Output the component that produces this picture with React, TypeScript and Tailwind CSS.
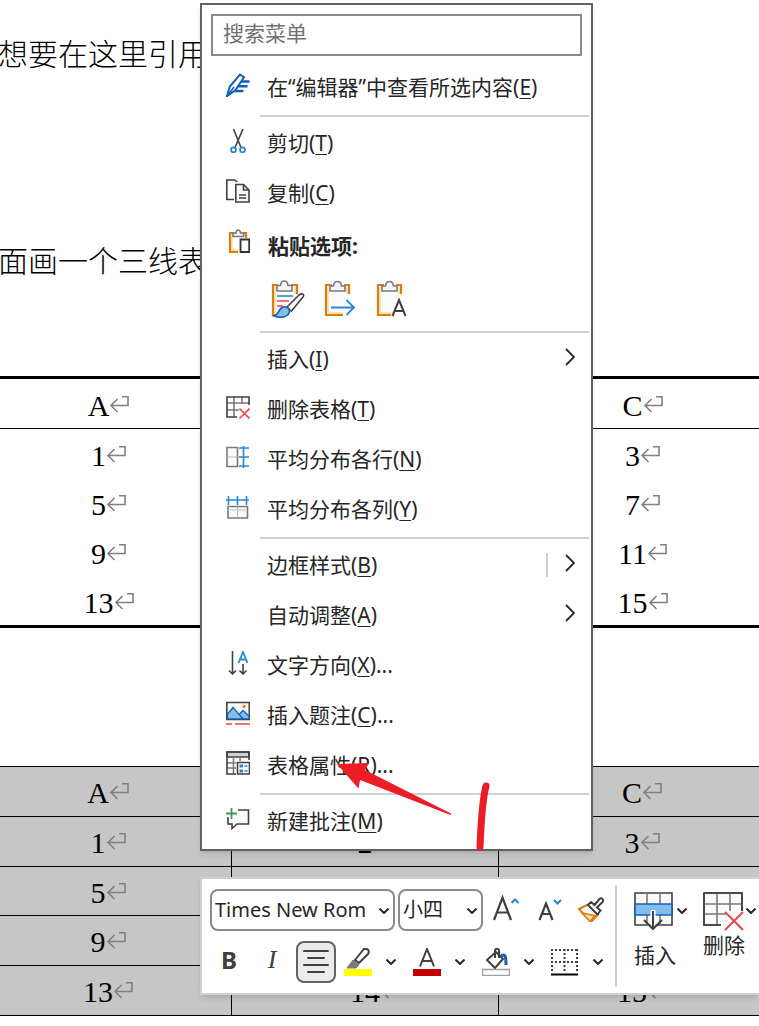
import React from 'react';

const rows = [
  ['1', '2', '3'],
  ['5', '6', '7'],
  ['9', '10', '11'],
  ['13', '14', '15'],
];

function ReturnMark() {
  return (
    <span className="inline-block w-0">
      <svg className="h-[21px] w-5" viewBox="0 0 20 21" fill="none" stroke="#808080" strokeWidth="1.600">
        <path d="M13 1.800h6v8.700H2M8.500 4 2 10.500 8.500 17" />
      </svg>
    </span>
  );
}

function ThreeLineTable() {
  return (
    <table className="w-full table-fixed border-separate border-spacing-0 text-center">
      <thead>
        <tr>
          {['A', 'B', 'C'].map((h) => (
            <th key={h} className="h-[53px] border-t-[3px] border-b border-black p-0 pt-1 font-normal">
              {h}
              <ReturnMark />
            </th>
          ))}
        </tr>
      </thead>
      <tbody className="[&>tr:last-child>td]:h-[52px] [&>tr:last-child>td]:border-b-[3px]">
        {rows.map((row) => (
          <tr key={row[0]}>
            {row.map((cell) => (
              <td key={cell} className="h-[49px] border-black p-0 pt-[3px]">
                {cell}
                <ReturnMark />
              </td>
            ))}
          </tr>
        ))}
      </tbody>
    </table>
  );
}

function GridTable() {
  return (
    <table className="w-full table-fixed border-separate border-spacing-0 border-b border-black bg-[#c6c6c6] text-center">
      <thead>
        <tr>
          {['A', 'B', 'C'].map((h) => (
            <th key={h} className="h-[50px] border-t border-r border-black p-0 pt-0.5 font-normal">
              {h}
              <ReturnMark />
            </th>
          ))}
        </tr>
      </thead>
      <tbody className="[&>tr:nth-child(2)>td]:h-[49px]">
        {rows.map((row) => (
          <tr key={row[0]}>
            {row.map((cell) => (
              <td key={cell} className="h-[50px] border-t border-r border-black p-0 pt-0.5">
                {cell}
                <ReturnMark />
              </td>
            ))}
          </tr>
        ))}
      </tbody>
    </table>
  );
}

interface IconProps {
  children: React.ReactNode;
  className?: string;
}

function Icon({ children, className = '' }: IconProps) {
  return (
    <svg className={`h-6 w-6 shrink-0 ${className}`} viewBox="0 0 24 24" fill="none" stroke="#404040" strokeWidth="1.600">
      {children}
    </svg>
  );
}

const icons = {
  editor: (
    <Icon>
      <path d="M14 8.500h9.500M11 13.300h10.500M8 18h9.500" stroke="#1060b8" strokeWidth="2.400" />
      <path d="M1 23.200 3.800 13.500 14 1.500l4 2.800L9.500 17z" fill="#fff" stroke="#1060b8" strokeWidth="2" />
      <path d="M1 23.200 8 14" stroke="#1060b8" />
    </Icon>
  ),
  cut: (
    <Icon>
      <path d="M7.500 0 15 18.500M17 0 9 18.500" />
      <circle cx="7.500" cy="20.800" r="2.500" stroke="#2589d2" strokeWidth="1.800" />
      <circle cx="16.500" cy="20.800" r="2.500" stroke="#2589d2" strokeWidth="1.800" />
    </Icon>
  ),
  copy: (
    <Icon>
      <path d="M8 20.500H.8V1h8l2.500 2" />
      <path d="M9.800 5.500h7.700l5.500 5.500v12H9.800z" fill="#fafafa" />
      <path d="M17.500 5.500V11H23M13 16h7M13 19h7" />
    </Icon>
  ),
  paste: (
    <Icon className="mb-2.5">
      <path d="M8 4H4v19h8M16 4h4v5" stroke="#e07b10" strokeWidth="2.200" />
      <path d="M5.800 6v15.200H12" stroke="#f8dc9c" />
      <path d="M7 7.500V4h3C10.500 0 14 0 14.500 4h3v3.500z" stroke="#7a7a7a" fill="#f5f5f5" />
      <path d="M14.500 10.500h8.700v12.500h-8.700z" fill="#fafafa" stroke="#333" strokeWidth="1.800" />
    </Icon>
  ),
  deleteTable: (
    <Icon>
      <path d="M1 8h22M1 15h12M8 2v20M16 2v7" stroke="#7a7a7a" />
      <path d="M11 22H1V2h22v8" />
      <path d="m13.500 13.500 10 10M23.500 13.500l-10 10" stroke="#e8474c" />
    </Icon>
  ),
  rows: (
    <Icon>
      <path d="M1 2.500h10.500v19H1z" stroke="#7a7a7a" fill="#fafafa" />
      <path d="M1 12h10" stroke="#bbb" strokeWidth="1" />
      <path d="M17.500 1v22M13 3h10M13 12h10M13 21h10" stroke="#2589d2" />
    </Icon>
  ),
  columns: (
    <Icon>
      <path d="M2 11.500h19.500V23H2z" stroke="#7a7a7a" fill="#fafafa" />
      <path d="M11.500 12v11M2 15h19" stroke="#bbb" strokeWidth="1" />
      <path d="M0 5h23M2.500 1v9M11.500 1v9M20.500 1v9" stroke="#2589d2" />
    </Icon>
  ),
  direction: (
    <Icon>
      <path d="M6.500 0v23M3 19.500 6.500 23l3.500-3.500M17 13v10M13.500 19.500 17 23l3.500-3.500" />
      <path d="M12.500 12 17 1 21.500 12M14 8.500h6" stroke="#2589d2" strokeWidth="1.800" />
    </Icon>
  ),
  caption: (
    <Icon>
      <path d="M.8 1.500h22.500v17H.8z" fill="#fafafa" />
      <path d="M1.500 13 7 6.500l10 11.300H1.500zM13 13.500l4-4 6 5.500v2.800h-6z" fill="#85bdea" stroke="#1060b8" strokeWidth="1.300" />
      <circle cx="18" cy="5.500" r="1.600" fill="#e07b10" stroke="none" />
      <path d="M0 23h6M9 23h15" stroke="#e8474c" />
    </Icon>
  ),
  properties: (
    <Icon>
      <path d="M1 1h22v5H1z" fill="#d0d0d0" />
      <path d="M1 12h9M1 17h9M7.500 6v17M14 6v4" stroke="#7a7a7a" />
      <path d="M10 23H1V1h22v8" />
      <path d="M11.500 11.500h12V23h-12z" fill="#fff" />
      <path d="M13.500 15h3.500M13.500 20h3.500" stroke="#2589d2" strokeWidth="3" />
      <path d="M18.500 15h3M18.500 20h3" stroke="#2589d2" />
    </Icon>
  ),
  comment: (
    <Icon>
      <path d="M12 3h10.500v14H11l-5 4.500V17H2v-7" fill="#fafafa" />
      <path d="M5.500 1v11M0 6.500h11" stroke="#3a9a55" strokeWidth="1.800" />
    </Icon>
  ),
};

interface MenuItemProps {
  label: string;
  mnemonic: string;
  icon?: React.ReactNode;
  suffix?: string;
  submenu?: boolean;
  split?: boolean;
}

function MenuItem({ label, mnemonic, icon, suffix = '', submenu, split }: MenuItemProps) {
  return (
    <button type="button" className="flex h-[50px] w-full items-center gap-[17px] pr-4 pl-6 text-left">
      <span className="w-6 shrink-0 pb-1">{icon}</span>
      <span className="flex-1">
        {label}(<u className="decoration-1 underline-offset-[3px]">{mnemonic}</u>){suffix}
      </span>
      {split && <span className="h-6 w-0.5 bg-[#d0d0d0]" />}
      {submenu && (
        <svg className="mb-1 h-[18px] w-2.5" viewBox="0 0 10 18" fill="none" stroke="#262626" strokeWidth="1.800">
          <path d="m1 1 8 8-8 8" />
        </svg>
      )}
    </button>
  );
}

function Divider() {
  return <hr className="mt-[3px] mr-0.5 mb-px ml-[58px] border-t-2 border-[#d0d0d0]" />;
}

function Clipboard() {
  return (
    <>
      <path d="M2 5h24v30H2z" fill="#fafafa" />
      <path d="M8 5H2v30h17M20 5h5v9" stroke="#e07b10" strokeWidth="2.200" />
      <path d="M4 7v26h15M23 7v7" stroke="#f8dc9c" strokeWidth="1.500" />
      <path d="M6 11V6h3.500c.500-6 7.500-6 8 0H21v5z" stroke="#7a7a7a" fill="#f5f5f5" />
    </>
  );
}

function PasteOptions() {
  return (
    <div className="flex h-[54px] items-center gap-[18px] pb-1 pl-[69px]">
      <button type="button" aria-label="保留源格式">
        <svg className="h-[38px] w-[34px]" viewBox="0 0 34 38" fill="none" strokeWidth="1.600">
          <path d="M2 5h24v30H2z" fill="#fafafa" />
          <path d="M7 5H2v30h6M20 5h6v9" stroke="#e07b10" strokeWidth="2.200" />
          <path d="M4 7v26h5M24 7v6" stroke="#f8dc9c" />
          <path d="M6 11V5.500h3.500c.500-6 7-6 7.500 0h4V11z" stroke="#7a7a7a" fill="#f5f5f5" />
          <path d="M6 16h16" stroke="#2589d2" />
          <path d="M6 21h12M6 26h6" stroke="#f0474c" />
          <path d="m15 28 13-13c3-2 6-1 4 2L20.500 31z" stroke="#404040" fill="#fafafa" />
          <path d="M3 36c5-1 4-7 9-9 4-1 8 2 6 6-2 5-10 5-15 3z" stroke="#1060b8" fill="#85bdea" />
        </svg>
      </button>
      <button type="button" aria-label="合并格式">
        <svg className="h-[38px] w-[34px]" viewBox="0 0 34 38" fill="none" strokeWidth="1.600">
          <g transform="translate(1 0)">
            <Clipboard />
            <path d="M20 20h7v16h-7z" fill="#fff" />
            <path d="M7 27.500h23M22.500 20l7.500 7.500-7.500 7.500" stroke="#2589d2" strokeWidth="1.800" />
          </g>
        </svg>
      </button>
      <button type="button" aria-label="只保留文本">
        <svg className="h-[38px] w-[34px]" viewBox="0 0 34 38" fill="none" strokeWidth="1.600">
          <g transform="translate(1 0)">
            <Clipboard />
            <path d="m14 38 7-20h8v20z" fill="#fff" />
            <path d="m16.500 36 6.500-16L29.500 36M18.500 31h9" stroke="#404040" strokeWidth="2" />
          </g>
        </svg>
      </button>
    </div>
  );
}

function ContextMenu() {
  return (
    <div className="absolute top-[3px] left-[200px] w-[393px] border-2 border-[#626262] bg-white pb-[3px] text-[21px] leading-7 text-[#262626] shadow-md">
      <input
        type="text"
        aria-label="搜索菜单"
        placeholder="搜索菜单"
        className="mx-[9px] mt-[9px] mb-1.5 block h-[42px] w-[375px] max-w-[calc(100%-18px)] border-2 border-[#8a8a8a] px-2.5 pb-1 placeholder:text-[#707070]"
      />
      <MenuItem icon={icons.editor} label="在“编辑器”中查看所选内容" mnemonic="E" />
      <Divider />
      <MenuItem icon={icons.cut} label="剪切" mnemonic="T" />
      <MenuItem icon={icons.copy} label="复制" mnemonic="C" />
      <div className="flex h-14 items-center gap-[18px] pl-6 font-bold">
        {icons.paste}
        <span>粘贴选项:</span>
      </div>
      <PasteOptions />
      <Divider />
      <MenuItem label="插入" mnemonic="I" submenu />
      <MenuItem icon={icons.deleteTable} label="删除表格" mnemonic="T" />
      <MenuItem icon={icons.rows} label="平均分布各行" mnemonic="N" />
      <MenuItem icon={icons.columns} label="平均分布各列" mnemonic="Y" />
      <Divider />
      <MenuItem label="边框样式" mnemonic="B" submenu split />
      <MenuItem label="自动调整" mnemonic="A" submenu />
      <MenuItem icon={icons.direction} label="文字方向" mnemonic="X" suffix="..." />
      <MenuItem icon={icons.caption} label="插入题注" mnemonic="C" suffix="..." />
      <MenuItem icon={icons.properties} label="表格属性" mnemonic="R" suffix="..." />
      <Divider />
      <MenuItem icon={icons.comment} label="新建批注" mnemonic="M" />
    </div>
  );
}

function Chevron({ className = '' }: { className?: string }) {
  return (
    <svg className={`h-1.5 w-2.5 shrink-0 ${className}`} viewBox="0 0 10 6" fill="none" stroke="#262626" strokeWidth="2">
      <path d="m.500.500 4.500 4.500L9.500.500" />
    </svg>
  );
}

function ToolSelect({ label, value, width }: { label: string; value: string; width: string }) {
  return (
    <label className={`relative block ${width}`}>
      <span className="sr-only">{label}</span>
      <select className="h-[42px] w-full appearance-none rounded-lg border-2 border-[#8a8a8a] bg-white pl-[3px]">
        <option>{value}</option>
      </select>
      <Chevron className="pointer-events-none absolute top-[19px] right-1.5" />
    </label>
  );
}

function ToolButton({ label, children }: { label: string; children: React.ReactNode }) {
  return (
    <button type="button" aria-label={label}>
      <svg className="h-7 w-7" viewBox="0 0 28 28" fill="none" stroke="#404040" strokeWidth="2">
        {children}
      </svg>
    </button>
  );
}

function SplitTool({ label, children }: { label: string; children: React.ReactNode }) {
  return (
    <div className="flex items-center gap-3.5">
      <ToolButton label={label}>{children}</ToolButton>
      <button type="button" aria-label={`${label}选项`}>
        <Chevron />
      </button>
    </div>
  );
}

function MiniToolbar() {
  return (
    <div className="absolute top-[877px] right-0 left-[200px] flex h-[118px] overflow-hidden border-2 border-r-0 border-[#d0d0d0] bg-white text-xl text-[#262626] shadow-md">
      <div className="w-[413px] shrink-0 pt-2.5 pl-2">
        <div className="flex items-center gap-[3px]">
          <ToolSelect label="字体" value="Times New Rom" width="w-[185px]" />
          <ToolSelect label="字号" value="小四" width="w-[85px]" />
          <div className="mb-1 ml-[7px] flex gap-3.5">
            <ToolButton label="增大字号">
              <path d="M1 26 9.500 3.500 18 26M4 18.500h11" strokeWidth="2.200" />
              <path d="m18.500 9 3.500-3.500L25.500 9" stroke="#2589d2" />
            </ToolButton>
            <ToolButton label="减小字号">
              <path d="m4.500 26 6.500-16.500L17.500 26M7 20h8.500" strokeWidth="2.200" />
              <path d="m19 6 3.500 3.500L26 6" stroke="#2589d2" />
            </ToolButton>
            <ToolButton label="格式刷">
              <path d="m2 15 9-4.500 10 10L14 28z" fill="#fafafa" stroke="#e07b10" />
              <path d="m5 19 13 2.500-5 6z" fill="#f8dc9c" stroke="#e07b10" strokeWidth="1.500" />
              <path d="m11 11 3-3 3.500 3 5-6c2-2 5 1 3 3L20 13.500l3.500 3-3 4z" fill="#fafafa" />
            </ToolButton>
          </div>
        </div>
        <div className="mt-2.5 flex items-center">
          <button type="button" className="mb-1 ml-[5px] w-7 text-center text-2xl font-bold text-[#404040]" aria-label="加粗">
            B
          </button>
          <button type="button" className="mb-1 ml-[15px] w-7 text-center font-['Liberation_Serif',serif] text-[26px] text-[#404040] italic" aria-label="倾斜">
            I
          </button>
          <button type="button" aria-label="居中" className="mr-2 ml-2.5 flex h-[42px] w-10 items-center justify-center rounded-lg border-2 border-[#626262] bg-[#ebebeb]">
            <svg className="h-6 w-[26px]" viewBox="0 0 26 24" stroke="#404040" strokeWidth="2" strokeLinecap="round">
              <path d="M1 1h24M5 8h16M1 15h24M5 22h16" />
            </svg>
          </button>
          <div className="flex gap-[17px]">
            <SplitTool label="突出显示">
              <path d="m11 12 8-10c2-3 8 0 5 4l-9 9z" fill="#fafafa" />
              <path d="m9 12 6 5-3 3H3z" fill="#7a7a7a" stroke="#7a7a7a" strokeWidth="1" />
              <path d="M0 24.500h28" stroke="#ff0" strokeWidth="7" />
            </SplitTool>
            <SplitTool label="字体颜色">
              <path d="M7 18.500 14 1l7 17.500M9.500 13h9" />
              <path d="M0 24.500h28" stroke="#c00000" strokeWidth="7" />
            </SplitTool>
            <SplitTool label="底纹">
              <path d="m5 12 9-8 7 7-8 9z" fill="#fafafa" />
              <path d="M13 10V3c0-3 4-3 4 0v7" />
              <path d="M19 8c4-3 5 0 5 9" stroke="#1060b8" strokeWidth="3" />
              <path d="M.500 21.500h27v6H.500z" fill="#fff" stroke="#a0a0a0" strokeWidth="1.500" />
            </SplitTool>
            <SplitTool label="边框">
              <path d="M0 2h27M0 14h27M1 1v23M13.500 1v23M26 1v23" strokeDasharray="2 2" strokeWidth="2" />
              <path d="M0 26.500h27" stroke="#000" />
            </SplitTool>
          </div>
        </div>
      </div>
      <div className="my-1.5 w-0.5 shrink-0 bg-[#d0d0d0]" />
      <button type="button" className="ml-[17px] w-14 shrink-0 self-start pt-[13px] text-[21px] leading-7">
        <span className="mb-2.5 flex items-start gap-1">
          <svg className="h-[39px] w-[39px] shrink-0" viewBox="0 0 39 39" fill="none" stroke="#404040" strokeWidth="1.600">
            <path d="M1 1h37v32H1z" fill="#fafafa" />
            <path d="M13 1v11M26 1v11M13 23v10M26 23v10" stroke="#7a7a7a" />
            <path d="M1 12h37v11H1z" fill="#85bdea" stroke="#1060b8" />
            <path d="M19 18v19" stroke="#fff" strokeWidth="5" />
            <path d="M19 19v18M10 28l9 9 9-9" strokeWidth="2" />
          </svg>
          <Chevron className="mt-4" />
        </span>
        <span className="block text-left">插入</span>
      </button>
      <button type="button" className="ml-[13px] w-14 shrink-0 self-start pt-[13px] text-[21px] leading-7">
        <span className="flex items-start gap-0.5">
          <svg className="h-[39px] w-[41px] shrink-0" viewBox="0 0 41 39" fill="none" stroke="#404040" strokeWidth="1.600">
            <path d="M18 33H1V1h38v18" fill="#fafafa" />
            <path d="M1 12h38M1 22h22M14 1v32M27 1v18" stroke="#7a7a7a" />
            <path d="M1 1h38v18M18 33H1V1" />
            <path d="m22 20 18 18M40 20 22 38" stroke="#e8474c" strokeWidth="2" />
          </svg>
          <Chevron className="mt-4" />
        </span>
        <span className="block text-left">删除</span>
      </button>
    </div>
  );
}

function Annotations() {
  return (
    <svg className="pointer-events-none absolute top-[750px] left-[330px] h-[110px] w-[180px]" viewBox="0 0 180 110" fill="none">
      <path d="M7 14 39 13l-4 7 86 43.500-.500 1.500L30 30l-1.500 8.500z" fill="#ee1c24" />
      <path d="M156 36c-4 15-5 36-6 61" stroke="#ee1c24" strokeWidth="7" strokeLinecap="round" />
    </svg>
  );
}

export default function App() {
  return (
    <main className="relative min-h-screen overflow-hidden bg-white pt-[29px] font-['Noto_Sans','Noto_Sans_CJK_SC',sans-serif] text-black">
      <div className="-ml-0.5 font-['Liberation_Serif','Noto_Sans_CJK_SC',serif] text-[30px] leading-[52px] font-light whitespace-nowrap">
        <p>想要在这里引用</p>
        <p className="mt-[155px]">面画一个三线表</p>
      </div>
      <div className="mt-[88px] -mr-[7px] -ml-[35px] flex flex-col gap-[138px] pb-2.5 font-['Liberation_Serif',serif] text-[30px] leading-[45px]">
        <ThreeLineTable />
        <GridTable />
      </div>
      <ContextMenu />
      <MiniToolbar />
      <Annotations />
    </main>
  );
}
